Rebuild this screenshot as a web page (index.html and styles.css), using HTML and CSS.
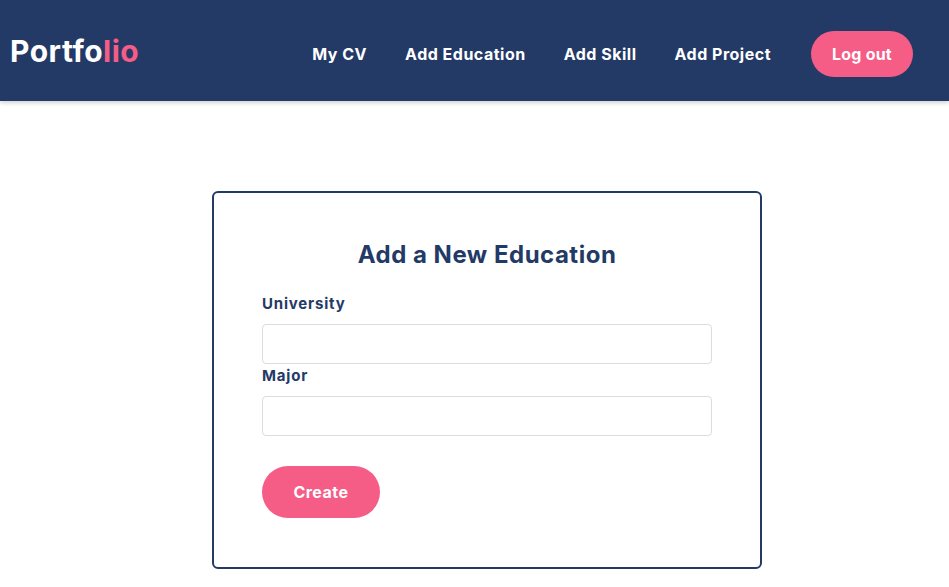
FILE: index.html
```html
<!DOCTYPE html>
<html>
<head>
<meta charset="utf-8">
<link rel="stylesheet" href="styles.css">
</head>
<body>
<header class="topbar">
  <div class="logo">Portfo<span class="accent">lio</span></div>
  <nav class="nav">
    <a class="nav-link" href="#">My CV</a>
    <a class="nav-link" href="#">Add Education</a>
    <a class="nav-link" href="#">Add Skill</a>
    <a class="nav-link" href="#">Add Project</a>
    <a class="btn-logout" href="#">Log out</a>
  </nav>
</header>
<main class="main">
  <form class="card">
    <h1 class="card-title">Add a New Education</h1>
    <label class="field-label">University</label>
    <input class="field-input" type="text">
    <label class="field-label">Major</label>
    <input class="field-input" type="text">
    <button class="btn-create" type="button">Create</button>
  </form>
</main>
</body>
</html>
```
FILE: styles.css
```css
* { box-sizing: border-box; }
html, body { margin: 0; padding: 0; }
body {
  font-family: "Inter", "Liberation Sans", sans-serif;
  background: #ffffff;
  color: #243a66;
}
.topbar {
  height: 101px;
  background: #243a66;
  display: flex;
  align-items: center;
  justify-content: space-between;
  padding: 0 36px 0 10px;
  box-shadow: 0 2px 4px rgba(0,0,0,0.18);
}
.logo {
  font-size: 30px;
  font-weight: 700;
  color: #ffffff;
  letter-spacing: 0.5px;
  margin-top: 0;
}
.accent { color: #f55c86; }
.nav {
  display: flex;
  align-items: center;
  gap: 38px;
  padding-top: 6px;
}
.nav-link {
  color: #ffffff;
  text-decoration: none;
  font-size: 16px;
  font-weight: 700;
  letter-spacing: 0.5px;
}
.btn-logout {
  display: flex;
  align-items: center;
  justify-content: center;
  width: 102px;
  height: 46px;
  border-radius: 23px;
  background: #f55c86;
  color: #ffffff;
  text-decoration: none;
  font-size: 16px;
  font-weight: 700;
  letter-spacing: 0.2px;
  margin-left: 2px;
}
.main {
  padding-top: 90px;
  padding-left: 212px;
}
.card {
  width: 550px;
  border: 2px solid #243a66;
  border-radius: 6px;
  padding: 45px 48px 49px;
  display: flex;
  flex-direction: column;
  align-items: flex-start;
}
.card-title {
  align-self: stretch;
  text-align: center;
  margin: 0 0 22px;
  font-size: 24px;
  line-height: 33px;
  font-weight: 700;
  letter-spacing: 0.5px;
  color: #243a66;
}
.field-label {
  font-size: 15px;
  line-height: 22px;
  font-weight: 700;
  letter-spacing: 0.8px;
  color: #243a66;
  margin-bottom: 9px;
}
.field-input {
  width: 450px;
  height: 40px;
  border: 1px solid #dcdcdc;
  border-radius: 4px;
  margin: 0 0 1px;
  font-family: inherit;
}
.field-input + .field-label { margin-bottom: 9px; }
.btn-create {
  margin-top: 29px;
  width: 118px;
  height: 52px;
  border: none;
  border-radius: 26px;
  background: #f55c86;
  color: #ffffff;
  font-family: inherit;
  font-size: 16px;
  font-weight: 700;
  letter-spacing: 0.5px;
}
```
